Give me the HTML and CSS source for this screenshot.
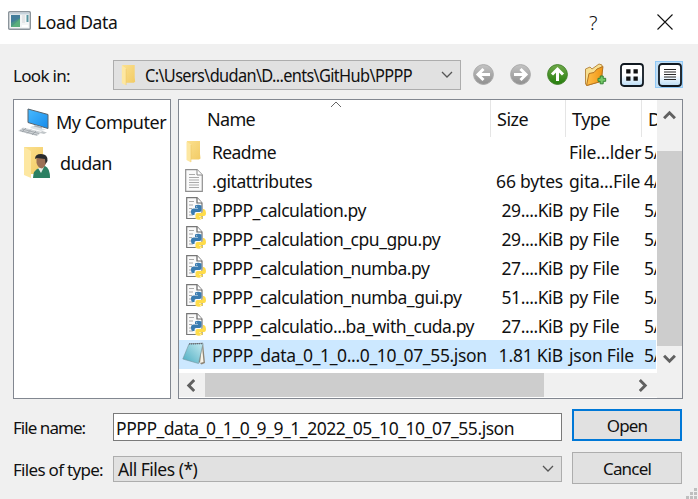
FILE: index.html
```html
<!DOCTYPE html>
<html lang="en">
<head>
<meta charset="utf-8">
<title>Load Data</title>
<link rel="stylesheet" href="styles.css">
</head>
<body>
<svg class="defs" width="0" height="0" aria-hidden="true">
<defs>
<linearGradient id="fold" x1="0" x2="1" y1="0" y2="1"><stop offset="0" stop-color="#fbe08e"/><stop offset="1" stop-color="#f2cb65"/></linearGradient>
<linearGradient id="gray" x1="0" x2="0" y1="0" y2="1"><stop offset="0" stop-color="#c4c4c4"/><stop offset="1" stop-color="#8f8f8f"/></linearGradient>
<linearGradient id="green" x1="0" x2="0" y1="0" y2="1"><stop offset="0" stop-color="#71aa4b"/><stop offset="1" stop-color="#247d0c"/></linearGradient>
<linearGradient id="blue" x1="0" x2="1" y1="0" y2="1"><stop offset="0" stop-color="#49baff"/><stop offset="1" stop-color="#168bea"/></linearGradient>
<linearGradient id="tile" x1="0" x2="0" y1="0" y2="1"><stop offset=".5" stop-color="#fff"/><stop offset="1" stop-color="#b9dcf6"/></linearGradient>
<linearGradient id="pad" x1="0" x2="1" y1="1" y2="0"><stop offset="0" stop-color="#48abc0"/><stop offset="1" stop-color="#c5eaf1"/></linearGradient>
<linearGradient id="orange" x1="0" x2="1"><stop offset="0" stop-color="#ffc04a"/><stop offset="1" stop-color="#ef9413"/></linearGradient>
<symbol id="folder" viewBox="0 0 15 22"><path d="M1 0H14V13L14.5 17.500L13 18.500H1Z" fill="url(#fold)"/><path d="M.5 .5L5 3.500V21.500L.5 19Z" fill="#fde7a1"/><path d="M5 4V21" stroke="#e9c15c" stroke-width=".5"/></symbol>
<symbol id="doc" viewBox="0 0 20 24"><path d="M.7 .7H12L17.300 6V22.300H.7Z" fill="#fafafa" stroke="#8f8f8f" stroke-width="1.200"/><path d="M12 .7V6H17.300" fill="#fff" stroke="#888"/><path d="M4 5.500H10M4 8.500H14M4 11H14M4 13.500H14M4 16H14M4 18.500H14" stroke="#aaa" stroke-width="1.100"/></symbol>
<symbol id="py" viewBox="0 0 20 24"><path d="M.7 .7H11L16 6V21.500H.7Z" fill="#fafafa" stroke="#777" stroke-width="1.200"/><path d="M11 .7V6H16" fill="#fff" stroke="#666" stroke-width="1.200"/><path d="M3 4.500H8M3 8H7M3 11.500H6M3 15H6M3 18H7" stroke="#aaa"/><path d="M9 8.500Q12 7.200 15.500 8.500V13Q15.500 15 13.500 15H10Q8.500 15 8.500 17V18H7Q5 18 5 14.500Q5 11.500 7.500 11.500H12V11H9Z" fill="#397bb0"/><path d="M17 12H18Q20 13 20 16Q20 19 18 19H13V19.600H16.500V21.500Q13 24 9.500 21.800V18Q9.500 16 11.500 16H15Q17 16 17 14Z" fill="#ffdc49"/><circle cx="10.700" cy="9.700" r=".5" fill="#fff"/><circle cx="14.700" cy="21.200" r=".5" fill="#fff"/></symbol>
<symbol id="notepad" viewBox="0 0 24 24"><path d="M7 1.500L21 .8L23 21L19.500 22.500L17 20Z" fill="#8d8474"/><path d="M20 4L21.500 20L18 21Z" fill="#f8f4e8"/><path d="M7 2L21 1.500L16.500 21.500L.8 17Z" fill="url(#pad)" stroke="#77969d" stroke-width=".6"/><path d="M7 2L21 1.500" stroke="#667" stroke-width="1.200" stroke-dasharray="1 1"/></symbol>
<symbol id="combo-arrow" viewBox="0 0 12 8"><path d="M1 1L6 6L11 1" fill="none" stroke="#555" stroke-width="1.300"/></symbol>
<symbol id="scroll-arrow" viewBox="0 0 12 10"><path d="M1 7.500L6 2.500L11 7.500" fill="none" stroke="#606060" stroke-width="2.700"/></symbol>
</defs>
</svg>
<main class="dialog">
<header class="titlebar">
<svg class="app-icon" viewBox="0 0 23 19"><rect x=".7" y=".7" width="21.600" height="17.600" rx="1" fill="#f3f5f6" stroke="#8b949b" stroke-width="1.400"/><path d="M2 2.500H21" stroke="#c6d3dc" stroke-width="2"/><rect x="3" y="4" width="9" height="12" fill="#4b9686"/><path d="M3 4H12V7L3 12Z" fill="#427d9b"/><path d="M3 16L12 8V16Z" fill="#5aaf7c"/><path d="M14 4H17V12H14Z" fill="#e4e5e7"/><path d="M18.500 4H20.500V11H18.500Z" fill="#5795a0"/><path d="M14 14H20V16H14Z" fill="#fff"/></svg>
<h1 class="title">Load Data</h1>
<span class="help">?</span>
<svg class="close" viewBox="0 0 16 16"><path d="M.5 .5L15.500 15.500M15.500 .5L.5 15.500" stroke="#111" stroke-width="1.100"/></svg>
</header>
<section class="toolbar">
<span class="label look">Look in:</span>
<div class="combo path"><svg class="combo-folder"><use href="#folder"/></svg><span class="path-text">C:\Users\dudan\D...ents\GitHub\PPPP</span><svg class="chev"><use href="#combo-arrow"/></svg></div>
<div class="tools">
<svg class="round" viewBox="0 0 21 21"><circle cx="10.500" cy="10.500" r="9.900" fill="url(#gray)" stroke="#aaa"/><path d="M17 10.500H6M10.500 5L5 10.500L10.500 16" fill="none" stroke="#fff" stroke-width="3"/></svg>
<svg class="round" viewBox="0 0 21 21"><circle cx="10.500" cy="10.500" r="9.900" fill="url(#gray)" stroke="#aaa"/><path d="M4 10.500H15M10.500 5L16 10.500L10.500 16" fill="none" stroke="#fff" stroke-width="3"/></svg>
<svg class="round" viewBox="0 0 21 21"><circle cx="10.500" cy="10.500" r="9.900" fill="url(#green)" stroke="#43832b"/><path d="M10.500 17V6M5 10.500L10.500 5L16 10.500" fill="none" stroke="#fff" stroke-width="3"/></svg>
<svg class="newfolder" viewBox="0 0 23 24"><path d="M1.500 6L6 4L8 6L15 1L18 2V18L3 22.500L1.500 21Z" fill="#f7df91" stroke="#b98b45"/><path d="M2.500 22.500L5 10.500L10 9.500L13 6L19 3.500L17 18.500Z" fill="url(#orange)" stroke="#b57422"/><path d="M14 15.300H16.200V13H19.200V15.300H21.700V18.300H19.200V20.800H16.200V18.300H14Z" fill="#75c869" stroke="#328333"/></svg>
<svg class="view" viewBox="0 0 24 24"><rect x="1" y="1" width="22" height="22" rx="3" fill="url(#tile)" stroke="#101820" stroke-width="1.800"/><path d="M6.200 6.200H10.500V10.500H6.200ZM13.500 6.200H17.800V10.500H13.500ZM6.200 13.500H10.500V17.800H6.200ZM13.500 13.500H17.800V17.800H13.500Z" fill="#111"/></svg>
<span class="view-on"><svg class="view" viewBox="0 0 24 24"><rect x="1" y="1" width="22" height="22" rx="3" fill="url(#tile)" stroke="#101820" stroke-width="1.800"/><path d="M6 6.500H18M6 9H18M6 11.500H18M6 14H18M6 16.500H18" stroke="#292929" stroke-width="1.200"/></svg></span>
</div>
</section>
<section class="panels">
<aside class="places">
<div class="place"><svg class="place-icon" viewBox="0 0 32 29"><path d="M10 1L30 6.500V20.500L10 14.500Z" fill="url(#blue)" stroke="#58636b"/><path d="M17 17L24 19V22L15 19Z" fill="#adb5bc"/><path d="M14 18L28 21.500L23 23L12 20Z" fill="#dde2e5"/><path d="M5 19.500L24 24L19 28L0 23Z" fill="#d1d5d8"/><path d="M4 21L21 25.500M2 22.500L19 27M8 20L4 24M13 21.500L9 25.500M18 23L14 27" stroke="#929a9f" stroke-width=".7"/><path d="M24 23L29 24.500L26 26L22 25Z" fill="#c1c6c9"/></svg><span class="computer">My Computer</span></div>
<div class="place"><svg class="place-icon user" viewBox="0 0 32 32"><path d="M5 0H24V27H5Z" fill="url(#fold)"/><path d="M5 0L12 4V31L5 28Z" fill="#fde7a1"/><path d="M14 31Q14 23 20 21L26 19Q31 21 31 31Z" fill="#2b8062"/><path d="M19 21L22 26L25 20Z" fill="#e7eee9"/><path d="M17.500 10L26.500 9L27.500 15Q26 20 23 21.500Q19 21 17.500 16Z" fill="#9b7055"/><path d="M16 12Q16 7 22 7Q29 7 28.500 14L26.500 17L26 12L18 11Z" fill="#292b2d"/></svg><span class="dudan">dudan</span></div>
</aside>
<div class="files">
<div class="listing">
<div class="head"><span class="col name">Name</span><span class="col">Size</span><span class="col">Type</span><span class="col date">D</span><svg class="sort" viewBox="0 0 12 7"><path d="M1 6L6 1L11 6" fill="none" stroke="#666"/></svg></div>
<div class="row"><svg class="fi fold"><use href="#folder"/></svg><span class="fn short">Readme</span><span class="sz"></span><span class="ty">File...lder</span><span class="dt">5/</span></div>
<div class="row"><svg class="fi doc"><use href="#doc"/></svg><span class="fn">.gitattributes</span><span class="sz">66 bytes</span><span class="ty">gita...File</span><span class="dt">4/</span></div>
<div class="row"><svg class="fi"><use href="#py"/></svg><span class="fn">PPPP_calculation.py</span><span class="sz kib">29....KiB</span><span class="ty">py File</span><span class="dt">5/</span></div>
<div class="row"><svg class="fi"><use href="#py"/></svg><span class="fn">PPPP_calculation_cpu_gpu.py</span><span class="sz kib">29....KiB</span><span class="ty">py File</span><span class="dt">5/</span></div>
<div class="row"><svg class="fi"><use href="#py"/></svg><span class="fn">PPPP_calculation_numba.py</span><span class="sz kib">27....KiB</span><span class="ty">py File</span><span class="dt">5/</span></div>
<div class="row"><svg class="fi"><use href="#py"/></svg><span class="fn">PPPP_calculation_numba_gui.py</span><span class="sz kib">51....KiB</span><span class="ty">py File</span><span class="dt">5/</span></div>
<div class="row"><svg class="fi"><use href="#py"/></svg><span class="fn">PPPP_calculatio...ba_with_cuda.py</span><span class="sz kib">27....KiB</span><span class="ty">py File</span><span class="dt">5/</span></div>
<div class="row selected"><svg class="fi note"><use href="#notepad"/></svg><span class="fn long">PPPP_data_0_1_0...0_10_07_55.json</span><span class="sz">1.81 KiB</span><span class="ty">json File</span><span class="dt">5/</span></div>
</div>
<div class="vscroll"><svg class="arrow"><use href="#scroll-arrow"/></svg><div class="vthumb"></div><svg class="arrow down"><use href="#scroll-arrow"/></svg></div>
<div class="hscroll"><svg class="arrow left"><use href="#scroll-arrow"/></svg><div class="hthumb"></div><svg class="arrow right"><use href="#scroll-arrow"/></svg></div>
<div class="corner"></div>
</div>
</section>
<form class="footer">
<span class="label fname">File name:</span><div class="input"><span class="value">PPPP_data_0_1_0_9_9_1_2022_05_10_10_07_55.json</span></div><button type="button" class="button open">Open</button>
<span class="label ftype">Files of type:</span><div class="combo types"><span class="all">All Files (*)</span><svg class="chev"><use href="#combo-arrow"/></svg></div><button type="button" class="button">Cancel</button>
</form>
<svg class="grip" viewBox="0 0 11 11"><path d="M8 0H11V3H8ZM4 4H7V7H4ZM8 4H11V7H8ZM0 8H3V11H0ZM4 8H7V11H4ZM8 8H11V11H8Z" fill="#bfbfbf"/></svg>
</main>
</body>
</html>
```
FILE: styles.css
```css
* { box-sizing: border-box; }
body { margin: 0; font: 18px/29px "Noto Sans", "Open Sans", sans-serif; color: #111; letter-spacing: -.5px; white-space: nowrap; }
svg { display: block; flex: none; }
.defs { position: absolute; }
.dialog { position: relative; width: 698px; height: 499px; background: #f0f0f0; overflow: hidden; }
.titlebar { height: 44px; background: #fff; display: flex; align-items: center; padding-left: 8px; }
.app-icon { width: 23px; height: 19px; margin-top: -3px; }
.title { font-size: 17.5px; font-weight: 400; margin: 0 0 0 6px; width: 553px; letter-spacing: -.35px; }
.help { width: 8px; margin-left: -1px; font-size: 20px; font-weight: 300; }
.close { width: 16px; height: 16px; margin-left: 60px; margin-top: -1px; }
.toolbar { height: 55px; display: flex; padding: 16px 15px 0 13px; }
.label { font-size: 17px; letter-spacing: -.7px; transform-origin: left; }
.look { width: 100px; line-height: 32px; }
.combo { border: 1px solid #adadad; background: #e1e1e1; display: flex; align-items: center; }
.path { width: 348px; height: 30px; padding: 0 7px; }
.combo-folder { width: 15px; height: 21px; margin-right: 9px; }
.path-text { width: 267px; font-size: 17.5px; letter-spacing: -.7px; transform: scaleX(.935); transform-origin: left; }
.chev { width: 12px; height: 8px; margin-left: auto; }
.tools { display: flex; align-items: flex-start; width: 211px; padding: 3px 0 0 12px; }
.round { width: 21px; height: 21px; margin-right: 16px; margin-top: 1px; }
.newfolder { width: 23px; height: 24px; margin-right: 13px; }
.view { width: 24px; height: 24px; }
.view-on { width: 28px; height: 27px; background: #c0def5; border: 1px solid #90c8f6; padding: 1px 0 0 2px; margin: -2px 0 0 11px; flex: none; }
.panels { display: flex; gap: 7px; height: 300px; padding-left: 13px; }
.places { width: 158px; border: 1px solid #828790; background: #fff; padding: 4px 0 0 5px; }
.place { display: flex; align-items: center; height: 39px; }
.place-icon { width: 32px; height: 29px; margin-top: -3px; margin-left: -1px; }
.place-icon.user { height: 32px; width: 32px; margin-top: 1px; margin-left: 0; }
.computer { margin: -2px 0 0 6px; }
.dudan { margin: 1px 0 0 9px; }
.files { display: grid; grid-template: 272px 26px / 478px 25px; width: 505px; border: 1px solid #828790; background: #fff; }
.listing { overflow: hidden; }
.head { display: grid; grid-template-columns: 312px 75px 76px 15px; height: 37px; position: relative; line-height: 38px; }
.col { border-right: 1px solid #e5e5e5; padding-left: 6px; overflow: hidden; }
.name { padding-left: 28px; letter-spacing: -.7px; }
.date { border: 0; }
.sort { position: absolute; left: 151px; top: 1px; width: 12px; height: 7px; }
.row { display: grid; grid-template-columns: 33px 280px 71px 81px 30px; height: 29px; line-height: 31px; width: 477px; overflow: hidden; font-size: 17.5px; }
.row > span { display: block; }
.fn { letter-spacing: -.46px; }
.short { letter-spacing: -.6px; }
.long { letter-spacing: -.36px; }
.sz { text-align: right; letter-spacing: -.2px; }
.kib { letter-spacing: -.45px; }
.ty { padding-left: 6px; letter-spacing: -.2px; }
.dt { letter-spacing: -.6px; }
.selected { background: #cce8ff; }
.fi { width: 20px; height: 24px; margin: 2px 0 0 7px; }
.fi.fold { width: 15px; height: 22px; margin: 4px 0 0 7px; }
.fi.doc { margin: 3px 0 0 6px; }
.fi.note { width: 24px; margin: 2px 0 0 3px; }
.vscroll { background: #f0f0f0; display: flex; flex-direction: column; align-items: center; }
.arrow { width: 13px; height: 11px; }
.vscroll .arrow { margin-top: 10px; }
.vthumb { width: 25px; height: 195px; margin-top: 30px; background: #cdcdcd; }
.down { transform: rotate(180deg); }
.vscroll .down { margin-top: 7px; }
.hscroll { background: #f0f0f0; border: solid #fff; border-width: 1px 0; display: flex; align-items: center; }
.left { transform: rotate(-90deg); margin: 0 7px 0 6px; }
.hthumb { width: 339px; height: 24px; background: #cdcdcd; }
.right { transform: rotate(90deg); margin-left: 92px; }
.corner { background: #f0f0f0; }
.footer { display: grid; grid-template-columns: 100px 449px 110px; grid-template-rows: 32px 32px; row-gap: 11px; padding: 10px 0 0 13px; align-items: center; }
.fname { margin-top: 4px; letter-spacing: -.95px; }
.ftype { margin-top: 2px; }
.input { height: 28px; margin-top: 4px; border: 1px solid #7a7a7a; background: #fff; padding-left: 2px; font-size: 17.5px; line-height: 28px; letter-spacing: -.46px; }
.types { height: 26px; padding: 0 7px 0 4px; margin-top: 2px; font-size: 17.5px; }
.button { height: 32px; margin-left: 10px; width: 110px; border: 1px solid #adadad; background: #e1e1e1; color: #111; font: 17px "Noto Sans", sans-serif; letter-spacing: -.8px; padding: 0; }
.open { border: 2px solid #0078d7; }
.grip { position: absolute; right: 1px; bottom: 0; width: 11px; height: 11px; }
```
